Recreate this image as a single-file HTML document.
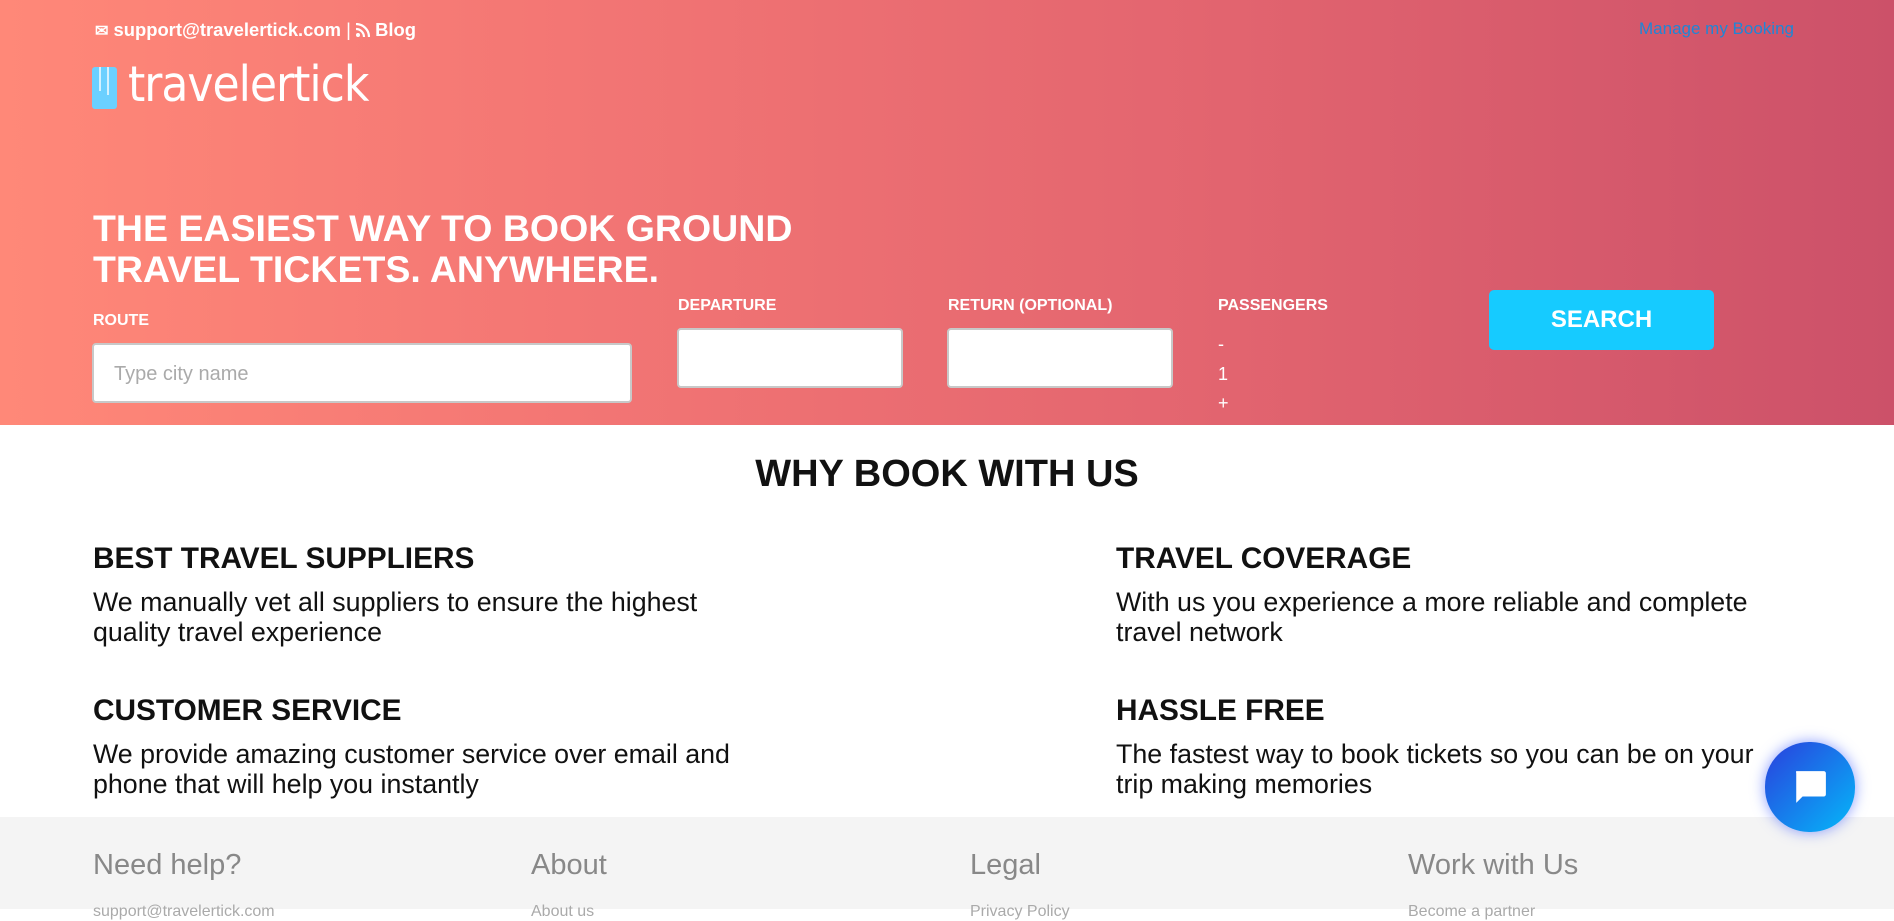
<!DOCTYPE html>
<html><head><meta charset="utf-8"><style>
*{margin:0;padding:0;box-sizing:border-box}
body{width:1894px;height:909px;overflow:hidden;font-family:"Liberation Sans",Arial,sans-serif;background:#fff;position:relative}
.hero{position:absolute;left:0;top:0;width:1894px;height:425px;background:linear-gradient(90deg,#ff8878 0%,#f37674 30%,#e2646f 65%,#cc5169 100%);color:#fff}
.abs{position:absolute}
.top{left:95px;top:19px;font-size:18.4px;font-weight:bold;white-space:nowrap}
.mmb{left:1639px;top:19px;font-size:17px;color:#1f86d6}
.logo{top:60px;font-family:"DejaVu Sans Condensed","Liberation Sans Narrow",sans-serif;font-weight:200;font-size:49px;letter-spacing:-1px;line-height:1}
h1{position:absolute;left:93px;top:208px;font-size:37.5px;line-height:41px;font-weight:bold;color:#fff}
.lbl{font-size:16px;font-weight:bold}
.inp{background:#fff;border:2px solid #c8c8c8;border-radius:4px}
.btn{left:1489px;top:290px;width:225px;height:60px;background:#16cbff;border-radius:5px;font-size:24px;font-weight:bold;text-align:center;line-height:60px}
.why{position:absolute;left:0;width:1894px;top:453px;text-align:center;font-size:38px;font-weight:bold;color:#111}
.f h3{font-size:29.8px;font-weight:bold;color:#111;margin-bottom:11px}
.f p{font-size:26.8px;line-height:30px;color:#111}
.foot{position:absolute;left:0;top:817px;width:1894px;height:92px;background:#f4f4f4}
.foot h4{position:absolute;top:32px;font-size:29px;font-weight:normal;color:#888}
.foot span{position:absolute;top:86px;font-size:16px;color:#aaa}
.chat{left:1765px;top:742px;width:90px;height:90px;border-radius:44px;background:linear-gradient(135deg,#2a3fdd,#04b8f9);box-shadow:0 0 14px rgba(60,90,255,.6)}
</style></head><body>
<div class="hero">
<div class="abs top"><span style="font-size:16px">✉</span> support@travelertick.com <span style="font-weight:normal">|</span> <svg width="14" height="14" viewBox="0 0 14 14" style="vertical-align:-1px"><circle cx="2" cy="12" r="2" fill="#fff"/><path d="M0 6a8 8 0 0 1 8 8M0 1a13 13 0 0 1 13 13" stroke="#fff" stroke-width="2.2" fill="none"/></svg> Blog</div>
<div class="abs mmb">Manage my Booking</div>
<div class="abs" style="left:92px;top:67px;width:25px;height:42px;background:#6bd0ff;border-radius:3px"><div style="position:absolute;left:7px;top:0;width:2px;height:24px;background:#fff;opacity:.7"></div><div style="position:absolute;left:15px;top:0;width:2px;height:28px;background:#fff;opacity:.7"></div></div>
<div class="abs logo" style="left:128px">travelertick</div>
<h1>THE EASIEST WAY TO BOOK GROUND<br>TRAVEL TICKETS. ANYWHERE.</h1>
<div class="abs lbl" style="left:93px;top:312px">ROUTE</div>
<div class="abs inp" style="left:92px;top:343px;width:540px;height:60px;color:#aaa;font-size:20px;padding:18px 0 0 20px">Type city name</div>
<div class="abs lbl" style="left:678px;top:297px">DEPARTURE</div>
<div class="abs inp" style="left:677px;top:328px;width:226px;height:60px"></div>
<div class="abs lbl" style="left:948px;top:297px">RETURN (OPTIONAL)</div>
<div class="abs inp" style="left:947px;top:328px;width:226px;height:60px"></div>
<div class="abs lbl" style="left:1218px;top:297px">PASSENGERS</div>
<div class="abs" style="left:1218px;top:330px;font-size:18px;line-height:29.5px">-<br>1<br>+</div>
<div class="abs btn">SEARCH</div>
</div>
<div class="why">WHY BOOK WITH US</div>
<div class="abs f" style="left:93px;top:542px"><h3>BEST TRAVEL SUPPLIERS</h3><p>We manually vet all suppliers to ensure the highest<br>quality travel experience</p></div>
<div class="abs f" style="left:1116px;top:542px"><h3>TRAVEL COVERAGE</h3><p>With us you experience a more reliable and complete<br>travel network</p></div>
<div class="abs f" style="left:93px;top:694px"><h3>CUSTOMER SERVICE</h3><p>We provide amazing customer service over email and<br>phone that will help you instantly</p></div>
<div class="abs f" style="left:1116px;top:694px"><h3>HASSLE FREE</h3><p>The fastest way to book tickets so you can be on your<br>trip making memories</p></div>
<div class="foot">
<h4 style="left:93px">Need help?</h4><h4 style="left:531px">About</h4><h4 style="left:970px">Legal</h4><h4 style="left:1408px">Work with Us</h4>
<span style="left:93px">support@travelertick.com</span><span style="left:531px">About us</span><span style="left:970px">Privacy Policy</span><span style="left:1408px">Become a partner</span>
</div>
<div class="abs chat"><svg width="36" height="36" viewBox="0 0 34 34" style="position:absolute;left:27px;top:27px"><path d="M4 2h26a2 2 0 0 1 2 2v20a2 2 0 0 1-2 2H10l-6 6V4a2 2 0 0 1 0-2z" fill="#fff"/></svg></div>
</body></html>
